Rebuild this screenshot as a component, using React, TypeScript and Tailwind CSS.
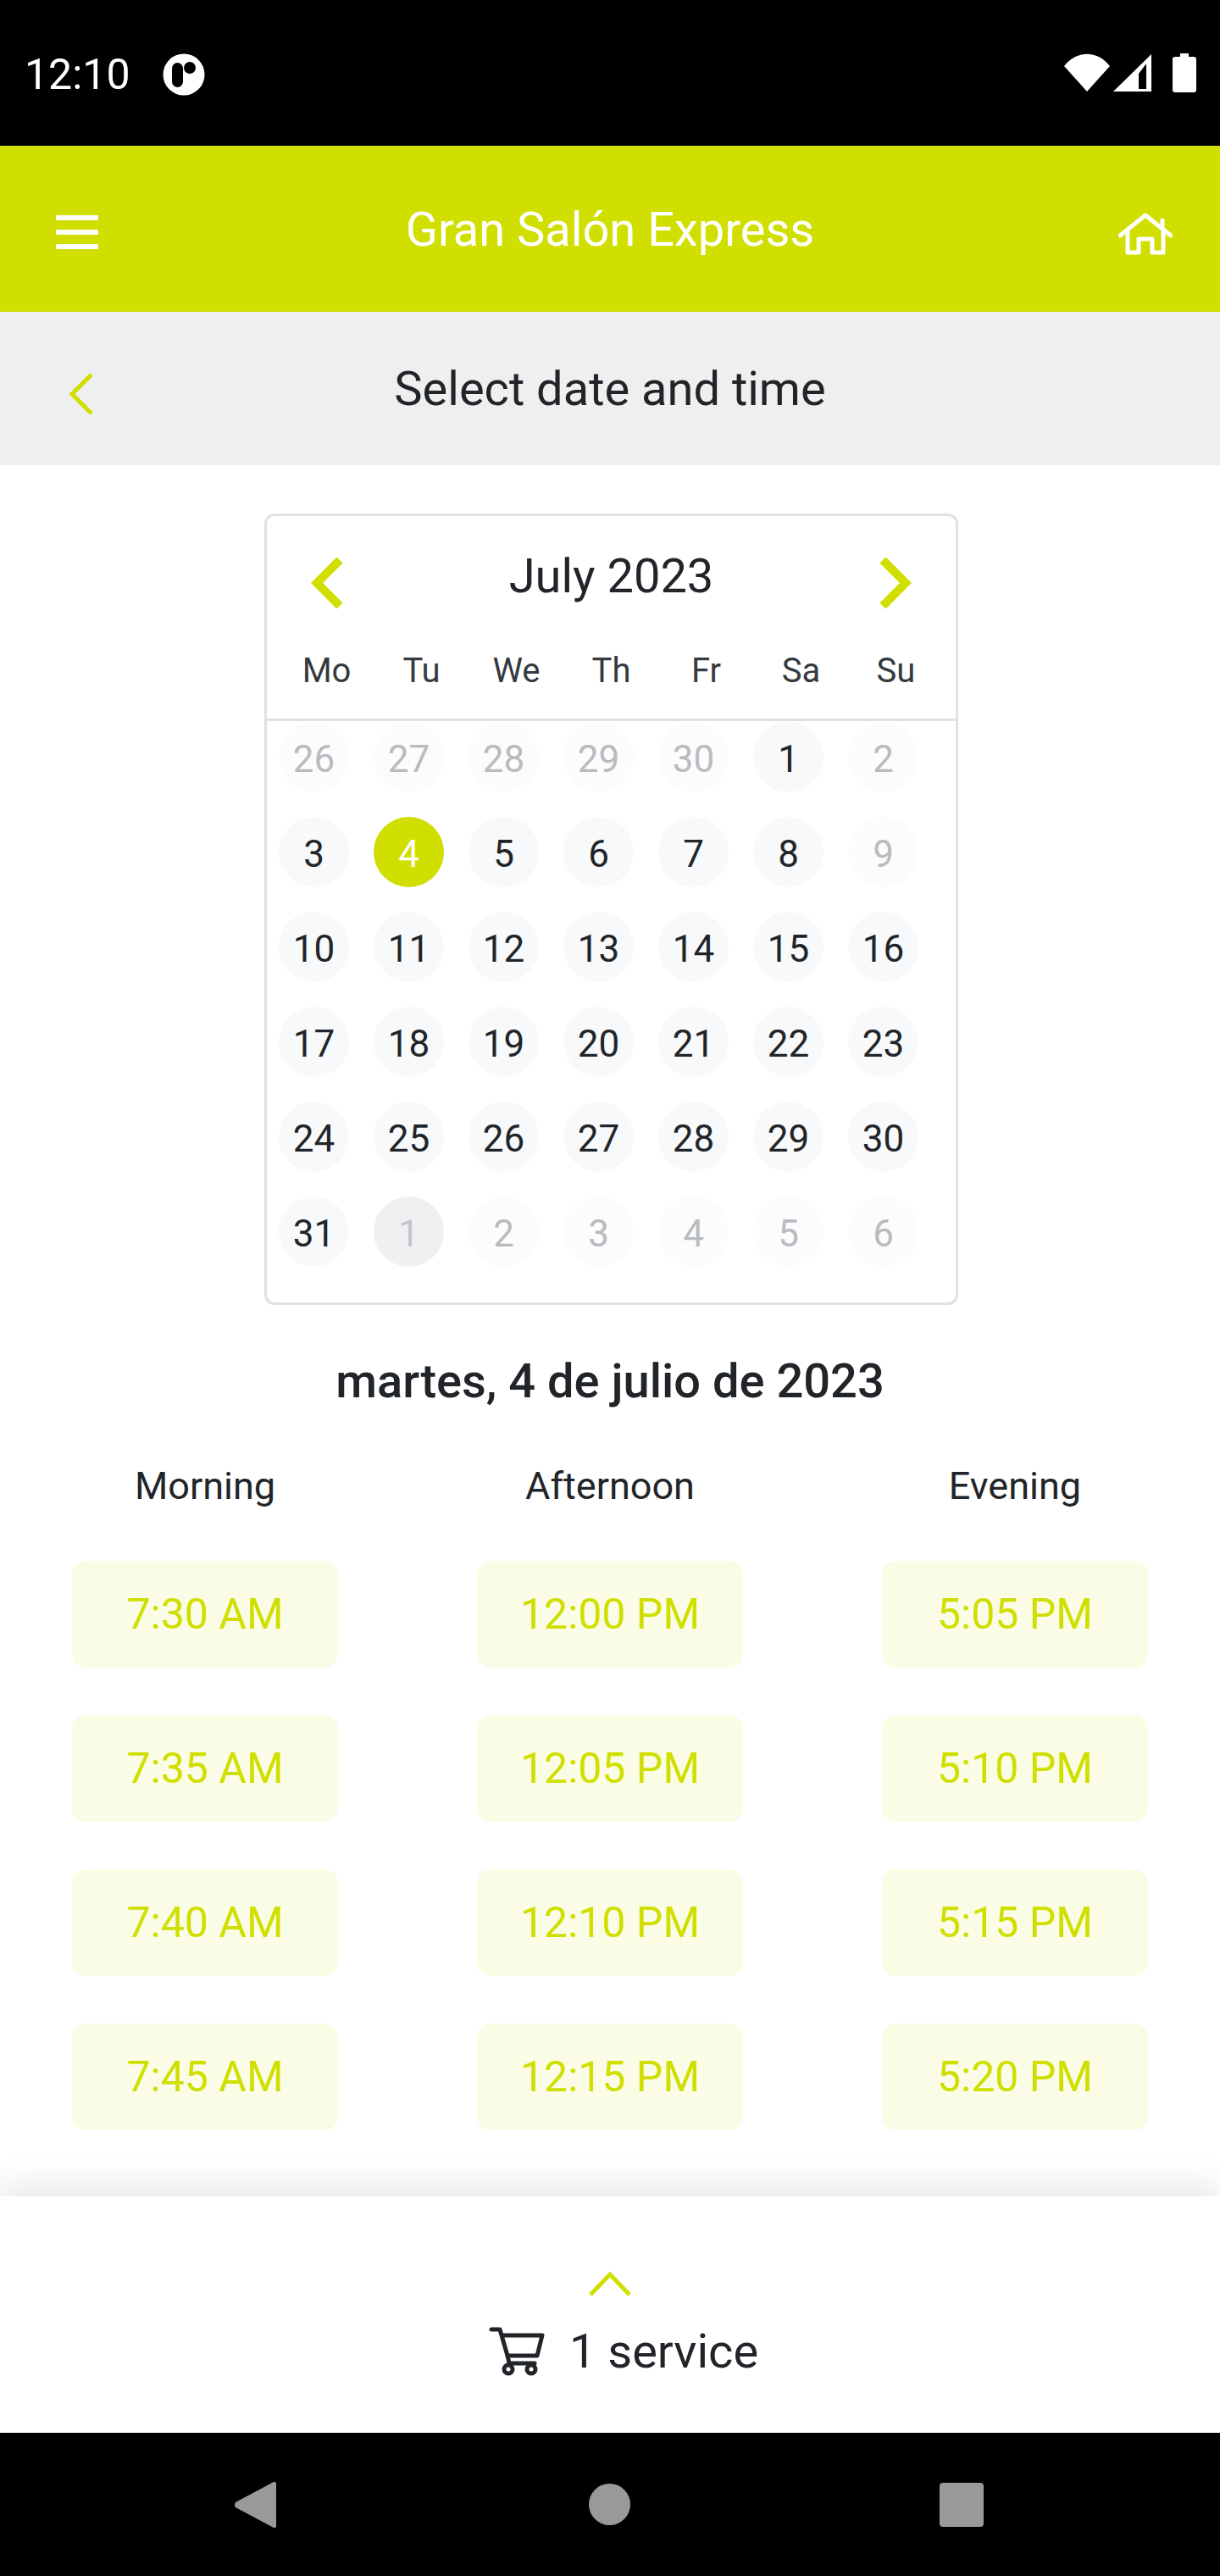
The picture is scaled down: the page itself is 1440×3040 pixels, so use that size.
const lime = "#d0df00";

const weekdays = ["Mo", "Tu", "We", "Th", "Fr", "Sa", "Su"];

interface Day {
  label: number;
  muted?: boolean;
  selected?: boolean;
  hover?: boolean;
}

const active = (from: number, to: number): Day[] => {
  const out: Day[] = [];
  for (let i = from; i <= to; i++) out.push({ label: i });
  return out;
};

const days: Day[] = [
  { label: 26, muted: true },
  { label: 27, muted: true },
  { label: 28, muted: true },
  { label: 29, muted: true },
  { label: 30, muted: true },
  { label: 1 },
  { label: 2, muted: true },
  { label: 3 },
  { label: 4, selected: true },
  ...active(5, 8),
  { label: 9, muted: true },
  ...active(10, 31),
  { label: 1, muted: true, hover: true },
  { label: 2, muted: true },
  { label: 3, muted: true },
  { label: 4, muted: true },
  { label: 5, muted: true },
  { label: 6, muted: true },
];

const slots = [
  { title: "Morning", times: ["7:30 AM", "7:35 AM", "7:40 AM", "7:45 AM"] },
  { title: "Afternoon", times: ["12:00 PM", "12:05 PM", "12:10 PM", "12:15 PM"] },
  { title: "Evening", times: ["5:05 PM", "5:10 PM", "5:15 PM", "5:20 PM"] },
];

const dayClass = (d: Day) => {
  if (d.selected) return "bg-[#d0df00] text-white";
  if (d.hover) return "bg-[#eff0f2] text-[#c4c6ca]";
  if (d.muted) return "bg-[#fcfcfd] text-[#b9bbbf]";
  return "bg-[#f8f9fa] text-[#212529]";
};

const StatusBar = () => (
  <div className="h-[172px] bg-black flex items-start justify-between pt-[63px] pl-[29px] pr-[28px]">
    <div className="flex items-center">
      <span className="text-[50px] leading-[48px] text-white w-[163px]">12:10</span>
      <svg width="50" height="50" viewBox="0 0 50 50">
        <circle cx="25" cy="25" r="24.5" fill="#fff" />
        <rect x="11" y="11" width="13" height="29" rx="6.5" fill="#000" />
        <circle cx="32" cy="17" r="7" fill="#000" />
      </svg>
    </div>
    <div className="flex items-center">
      <svg width="54" height="46" viewBox="0 0 54 46">
        <path d="M0 15 C15 -4 39 -4 54 15 L27 45 Z" fill="#fff" />
      </svg>
      <svg width="46" height="46" viewBox="0 0 46 46" className="ml-[4px]">
        <path fillRule="evenodd" d="M45 1 V45 H0 Z M30 42 H39 V12 L30 24 Z" fill="#fff" />
      </svg>
      <svg width="28" height="46" viewBox="0 0 28 46" className="ml-[24px]">
        <path d="M9 0 H19 V4 H25 Q28 4 28 7 V43 Q28 46 25 46 H3 Q0 46 0 43 V7 Q0 4 3 4 H9 Z" fill="#fff" />
      </svg>
    </div>
  </div>
);

const Header = () => (
  <div className="h-[196px] bg-[#d0df00] grid grid-cols-[1fr_auto_1fr] items-center pl-[66px] pr-[66px] text-white">
    <div className="flex flex-col gap-[11px] w-[50px] mt-[7px]">
      <div className="h-[6px] bg-white rounded-[1px]" />
      <div className="h-[6px] bg-white rounded-[1px]" />
      <div className="h-[6px] bg-white rounded-[1px]" />
    </div>
    <div className="text-[56px] leading-[64px] mt-[1px]">Gran Salón Express</div>
    <div className="flex justify-end mt-[12px] -mr-[10px]">
      <svg width="64" height="50" viewBox="0 0 64 50" fill="none" stroke="#fff" strokeWidth="5" strokeLinecap="round" strokeLinejoin="round">
        <path d="M2 27 L32 3 L62 27" />
        <path d="M52 18 V9" />
        <path d="M11 22 V47 H24 V31 H40 V47 H53 V22" />
      </svg>
    </div>
  </div>
);

const SubHeader = () => (
  <div className="h-[181px] bg-[#efefef] grid grid-cols-[1fr_auto_1fr] items-center px-[80px]">
    <svg width="32" height="50" viewBox="0 0 32 50" fill="none" stroke={lime} strokeWidth="5" className="mt-[12px]">
      <path d="M28 2 L5 25 L28 48" />
    </svg>
    <div className="text-[56px] leading-[64px] text-[#212529] mt-[1px]">Select date and time</div>
    <div />
  </div>
);

const Calendar = () => (
  <div className="w-[819px] h-[934px] border-[3px] border-[#dee2e6] rounded-[12px] ml-[312px]">
    <div className="flex items-start justify-between pl-[52px] pr-[52px] h-[103px] pt-[39px]">
      <svg width="38" height="60" viewBox="0 0 38 60" fill="none" stroke={lime} strokeWidth="10" className="mt-[10px]">
        <path d="M34 3 L7 30 L34 57" />
      </svg>
      <div className="text-[56px] leading-[64px] text-[#212529]">July 2023</div>
      <svg width="38" height="60" viewBox="0 0 38 60" fill="none" stroke={lime} strokeWidth="10" className="mt-[10px]">
        <path d="M4 3 L31 30 L4 57" />
      </svg>
    </div>
    <div className="grid grid-cols-[repeat(7,112px)] pl-[14px] h-[139px] pt-[56px] border-b-[3px] border-[#dee2e6] text-[40px] leading-[48px] text-[#343a40] text-center">
      {weekdays.map((w) => (
        <div key={w} className="ml-[15px] w-[83px]">{w}</div>
      ))}
    </div>
    <div className="grid grid-cols-[repeat(7,83px)] gap-x-[29px] gap-y-[29px] pl-[14px] pt-[1px]">
      {days.map((d, i) => (
        <div
          key={i}
          className={`w-[83px] h-[83px] rounded-full flex items-center justify-center text-[44px] leading-none pt-[4px] ${dayClass(d)}`}
        >
          {d.label}
        </div>
      ))}
    </div>
  </div>
);

const Times = () => (
  <div className="grid grid-cols-3 px-[3px]">
    {slots.map((s) => (
      <div key={s.title} className="flex flex-col items-center">
        <div className="text-[45px] leading-[52px] text-[#212529] h-[114px]">{s.title}</div>
        <div className="flex flex-col gap-[56px]">
          {s.times.map((t) => (
            <div
              key={t}
              className="w-[314px] h-[126px] rounded-[16px] bg-[#fafce6] text-[#d0df00] text-[50px] flex items-center justify-center"
            >
              {t}
            </div>
          ))}
        </div>
      </div>
    ))}
  </div>
);

const Cart = () => (
  <div className="h-[279px] bg-white shadow-[0_-12px_40px_rgba(0,0,0,0.10)] flex flex-col items-center pt-[88px] relative">
    <svg width="50" height="30" viewBox="0 0 50 30" fill="none" stroke={lime} strokeWidth="5">
      <path d="M2 28 L25 4 L48 28" />
    </svg>
    <div className="flex items-center mt-[33px] pl-[32px] text-[#212529]">
      <svg width="66" height="58" viewBox="0 0 66 58" fill="none" stroke="#212529" strokeWidth="5" strokeLinecap="round" strokeLinejoin="round">
        <path d="M3 3 H13 L22 34 H57 L63 10 H16" />
        <path d="M22 34 L24 43 H54" />
        <circle cx="23" cy="50" r="5" />
        <circle cx="50" cy="50" r="5" />
      </svg>
      <span className="text-[56px] leading-[64px] ml-[29px]">1 service</span>
    </div>
  </div>
);

const NavBar = () => (
  <div className="h-[169px] bg-black flex items-center justify-between pl-[276px] pr-[279px]">
    <svg width="50" height="56" viewBox="0 0 50 56">
      <path d="M47 1 Q50 0 50 4 V52 Q50 56 47 55 L2 31 Q0 28 2 25 Z" fill="#999" />
    </svg>
    <div className="w-[49px] h-[49px] rounded-full bg-[#999] ml-[4px]" />
    <div className="w-[52px] h-[52px] rounded-[4px] bg-[#999]" />
  </div>
);

export default function App() {
  return (
    <div className="w-[1440px] h-[3040px] flex flex-col bg-white font-[Roboto,sans-serif] overflow-hidden">
      <StatusBar />
      <Header />
      <SubHeader />
      <div className="flex-1 pt-[57px]">
        <Calendar />
        <div className="text-[56px] leading-[64px] font-medium text-[#212529] text-center mt-[58px]">
          martes, 4 de julio de 2023
        </div>
        <div className="mt-[66px]">
          <Times />
        </div>
      </div>
      <Cart />
      <NavBar />
    </div>
  );
}
